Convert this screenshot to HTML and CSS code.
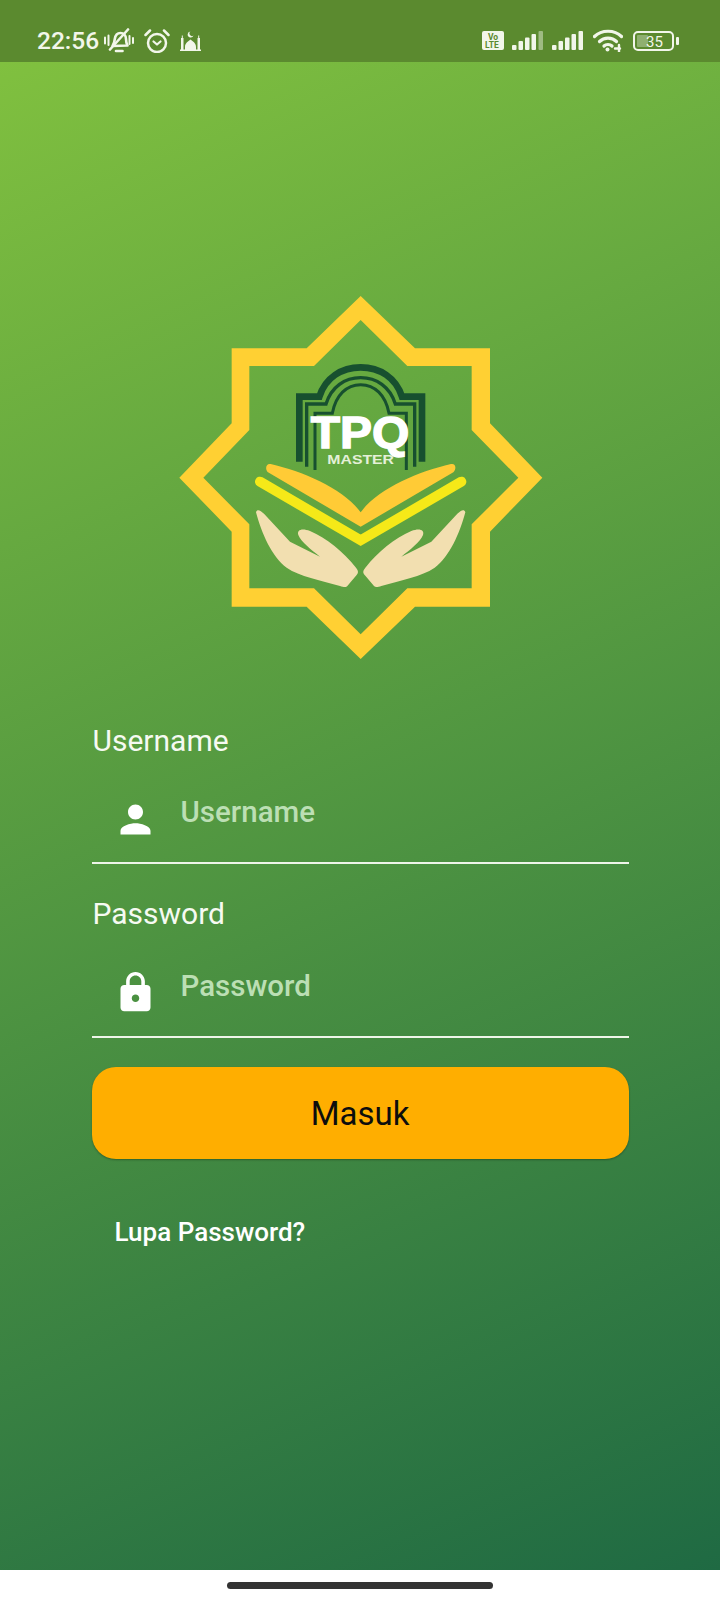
FILE: index.html
```html
<!DOCTYPE html>
<html lang="id">
<head>
<meta charset="utf-8">
<title>TPQ Master</title>
<link rel="stylesheet" href="styles.css">
</head>
<body>
<div class="screen">
  <header class="status">
    <span class="time">22:56</span>
    <svg class="ic-bell" viewBox="0 0 30 25" fill="none" stroke="#f2f6ea" stroke-width="2.6" stroke-linecap="round" stroke-linejoin="round">
      <path d="M8.500 18c1.500-2 2-4 2.300-7C11.300 7.500 13.500 5 16.500 5c3 0 5.500 2.500 5.500 6 0 2.500.5 4.500 1.500 6.500l-15 .5z"/>
      <path d="M12 23h6.500"/>
      <path d="M6 21.500 24 1.500" stroke-width="2.600"/>
      <path d="M1 9.500v6M4.500 7.500v9.500M25.500 8v8M29 10v5" stroke-width="2"/>
    </svg>
    <svg class="ic-alarm" viewBox="0 0 26 24" fill="none" stroke="#f2f6ea" stroke-linecap="round" stroke-linejoin="round">
      <circle cx="13" cy="14" r="9" stroke-width="2.500"/>
      <path d="M9.500 12.500 13 15.500l3.500-3" stroke-width="2.200"/>
      <path d="M1.500 6 6 1.500M24.500 6 20 1.500" stroke-width="2.500"/>
    </svg>
    <svg class="ic-mosque" viewBox="0 0 21 20" fill="#f2f6ea">
      <path d="M1 7h2.500v13H1zM17.500 7H20v13h-2.500zM1.800 4.500h1v3h-1zM18.200 4.500h1v3h-1z"/>
      <path d="M5 20v-4c0-4 3-5.500 5.500-7.500C13 10.500 16 12 16 16v4z"/>
      <path d="M10.500 0.500a3 3 0 1 0 3 4 2.500 2.500 0 0 1-3-4z"/>
      <path d="M0 18.500h21V20H0z"/>
    </svg>
    <span class="status-spacer"></span>
    <svg class="ic-volte" viewBox="0 0 22 19">
      <rect width="22" height="19" rx="2" fill="#f2f6ea"/>
      <text x="6" y="8.500" class="volte-txt">Vo</text>
      <text x="3" y="16.500" class="volte-txt">LTE</text>
    </svg>
    <svg class="ic-signal" viewBox="0 0 31 19" fill="#f2f6ea">
      <rect x="0" y="14" width="4.500" height="5" rx="1"/>
      <rect x="6.500" y="10" width="4.500" height="9" rx="1"/>
      <rect x="13" y="6.500" width="4.500" height="12.500" rx="1"/>
      <rect x="19.500" y="3" width="4.500" height="16" rx="1"/>
      <rect x="26.500" y="0" width="4.500" height="19" rx="1" fill-opacity=".45"/>
    </svg>
    <svg class="ic-signal" viewBox="0 0 31 19" fill="#f2f6ea">
      <rect x="0" y="14" width="4.500" height="5" rx="1"/>
      <rect x="6.500" y="10" width="4.500" height="9" rx="1"/>
      <rect x="13" y="6.500" width="4.500" height="12.500" rx="1"/>
      <rect x="19.500" y="3" width="4.500" height="16" rx="1"/>
      <rect x="26.500" y="0" width="4.500" height="19" rx="1"/>
    </svg>
    <svg class="ic-wifi" viewBox="0 0 30 23" fill="none" stroke="#f2f6ea" stroke-width="3.200" stroke-linecap="round">
      <path d="M1.500 7.500C8.500 .5 21.500 .5 28.500 7.500"/>
      <path d="M6.500 12.500c4.500-4.500 12.500-4.500 17 0"/>
      <path d="M11 17c2-2 6-2 8 0"/>
      <circle cx="14.500" cy="20.500" r="2" fill="#f2f6ea" stroke="none"/>
      <path d="M22 19.500h5M26 16v7" stroke-width="2.400"/>
    </svg>
    <svg class="ic-batt" viewBox="0 0 46 20">
      <rect x="1" y="1" width="39" height="18" rx="4" fill="none" stroke="#f2f6ea" stroke-width="2"/>
      <rect x="4" y="4" width="11" height="12" rx="1" fill="#f2f6ea" fill-opacity=".35"/>
      <rect x="43" y="6" width="3" height="8" rx="1" fill="#f2f6ea"/>
      <text x="13" y="15.500" class="batt-txt">35</text>
    </svg>
  </header>

  <main class="login">
    <svg class="logo" viewBox="0 0 1140 1155" role="img" aria-label="TPQ Master">
      <path fill="#ffd033" fill-rule="evenodd" d="M572 33 735 190H960V415L1117 578 960 740V965H735L572 1122 410 965H185V740L28 578 185 415V190H410ZM572 105 432 243H238V435L100 578 238 718V910H432L572 1048 712 910H905V718L1045 578 905 435V243H712Z"/>
      <g fill="none" stroke="#17502f" stroke-linejoin="miter">
        <path stroke-width="20" d="M388 530V335H448C466 278 515 247 572 247 629 247 678 278 696 335H756V530"/>
        <path stroke-width="10" d="M410 545V357H468C484 305 525 278 572 278 619 278 660 305 676 357H734V545"/>
        <path stroke-width="9" d="M435 555V385H487C497 330 530 299 572 299 614 299 647 330 657 385H709V555"/>
      </g>
      <text x="570" y="490" class="logo-tpq" textLength="296" lengthAdjust="spacingAndGlyphs">TPQ</text>
      <text x="572" y="538" class="logo-master" textLength="200" lengthAdjust="spacingAndGlyphs">MASTER</text>
      <path fill="#ffcb36" d="M302 537C400 560 520 610 572 682 624 610 745 560 843 537 858 534 860 552 850 562L572 725 294 562C284 552 288 534 302 537Z"/>
      <path fill="none" stroke="#f5e918" stroke-width="30" stroke-linecap="round" stroke-linejoin="miter" d="M270 590 572 766 874 590"/>
      <path fill="#f2dfb0" d="M258 682C262 670 272 678 282 686L360 770 450 815C425 795 392 770 385 750 380 735 395 728 420 738 470 760 520 800 558 848 566 858 566 864 558 872L532 903C528 908 520 906 510 903 450 885 390 875 350 848 305 815 275 745 258 682Z"/>
      <path fill="#f2dfb0" d="M886 682C882 670 872 678 862 686L784 770 694 815C719 795 752 770 759 750 764 735 749 728 724 738 674 760 624 800 586 848 578 858 578 864 586 872L612 903C616 908 624 906 634 903 694 885 754 875 794 848 839 815 869 745 886 682Z"/>
    </svg>

    <div class="form">
      <div class="field">
        <label class="field-label">Username</label>
        <div class="field-row">
          <svg class="field-icon" viewBox="0 0 24 24" fill="#fff"><path d="M12 12c2.210 0 4-1.790 4-4s-1.790-4-4-4-4 1.790-4 4 1.790 4 4 4zm0 2c-2.670 0-8 1.340-8 4v2h16v-2c0-2.660-5.330-4-8-4z"/></svg>
          <span class="placeholder">Username</span>
        </div>
      </div>
      <div class="field">
        <label class="field-label">Password</label>
        <div class="field-row">
          <svg class="field-icon" viewBox="0 0 24 24" fill="#fff"><path d="M18 8h-1V6c0-2.760-2.240-5-5-5S7 3.240 7 6v2H6c-1.100 0-2 .9-2 2v10c0 1.100.9 2 2 2h12c1.100 0 2-.9 2-2V10c0-1.100-.9-2-2-2zm-6 9c-1.100 0-2-.9-2-2s.9-2 2-2 2 .9 2 2-.9 2-2 2zm3.100-9H8.900V6c0-1.710 1.390-3.100 3.100-3.100 1.710 0 3.100 1.390 3.100 3.100v2z"/></svg>
          <span class="placeholder">Password</span>
        </div>
      </div>
      <button class="submit" type="button">Masuk</button>
      <a class="forgot">Lupa Password?</a>
    </div>
  </main>

  <footer class="navbar"><span class="pill"></span></footer>
</div>
</body>
</html>
```
FILE: styles.css
```css
* { box-sizing: border-box; }
html, body { margin: 0; padding: 0; }
body { font-family: Roboto, "Liberation Sans", sans-serif; background: #fff; }

.screen { width: 720px; height: 1600px; display: flex; flex-direction: column; overflow: hidden; }

.status { height: 62px; flex: none; background: #5b8a2f; display: flex; align-items: center; padding: 19px 41px 0 37px; color: #f2f6ea; }
.time { font-size: 24.500px; font-weight: 500; line-height: 28px; margin-right: 5px; }
.ic-bell { width: 30px; height: 25px; margin-right: 10px; }
.ic-alarm { width: 26px; height: 24px; margin-right: 10px; }
.ic-mosque { width: 21px; height: 20px; }
.status-spacer { flex: 1; }
.ic-volte { width: 22px; height: 19px; margin-right: 8px; }
.ic-signal { width: 31px; height: 19px; margin-right: 9px; }
.ic-wifi { width: 30px; height: 23px; margin-left: 1px; margin-right: 10px; }
.ic-batt { width: 46px; height: 20px; margin-right: 0; }
.volte-txt { font-family: Roboto, sans-serif; font-size: 8.500px; font-weight: 700; fill: #5b8a2f; }
.batt-txt { font-family: Roboto, sans-serif; font-size: 15px; fill: #f2f6ea; }

.login { flex: 1; display: flex; flex-direction: column; align-items: center; padding-top: 223px; background: linear-gradient(157deg, #80c03f 0%, #1f6a43 100%); }
.logo { width: 380px; height: 385px; display: block; flex: none; }
.logo-tpq { font-family: "Liberation Sans", sans-serif; font-weight: 700; font-size: 132px; fill: #fff; stroke: #fff; stroke-width: 4px; text-anchor: middle; }
.logo-master { font-family: "Liberation Sans", sans-serif; font-weight: 700; font-size: 38px; fill: #e4f0d8; text-anchor: middle; }

.form { width: 537px; margin-top: 54px; display: flex; flex-direction: column; align-items: stretch; }
.field { display: flex; flex-direction: column; margin-bottom: 33px; }
.field:nth-of-type(2) { margin-bottom: 29px; }
.field-label { font-size: 30px; line-height: 34px; color: #f6faf2; padding-left: 1px; }
.field-row { height: 107px; display: flex; align-items: center; padding: 0 0 0 21px; border-bottom: 2px solid #eef5e9; }
.field:first-of-type .field-row { height: 106px; }
.field-icon { width: 45px; height: 45px; flex: none; margin-top: 18px; margin-right: 23px; }
.placeholder { font-size: 29.500px; font-weight: 500; line-height: 34px; color: #bcdfb4; margin-top: 4px; }
.submit { height: 92px; border: 0; border-radius: 24px; background: #ffae00; color: #0d0d0d; font: 400 33px/1 Roboto, sans-serif; padding: 0; box-shadow: 0 1px 2px rgba(0,0,0,.3); }
.forgot { margin: 58px 0 0 23px; font-size: 26px; font-weight: 500; line-height: 30px; color: #fff; }

.navbar { height: 30px; flex: none; background: #fff; display: flex; justify-content: flex-start; padding: 12px 0 0 227px; }
.pill { width: 266px; height: 7px; border-radius: 4px; background: #333; display: block; }
```
